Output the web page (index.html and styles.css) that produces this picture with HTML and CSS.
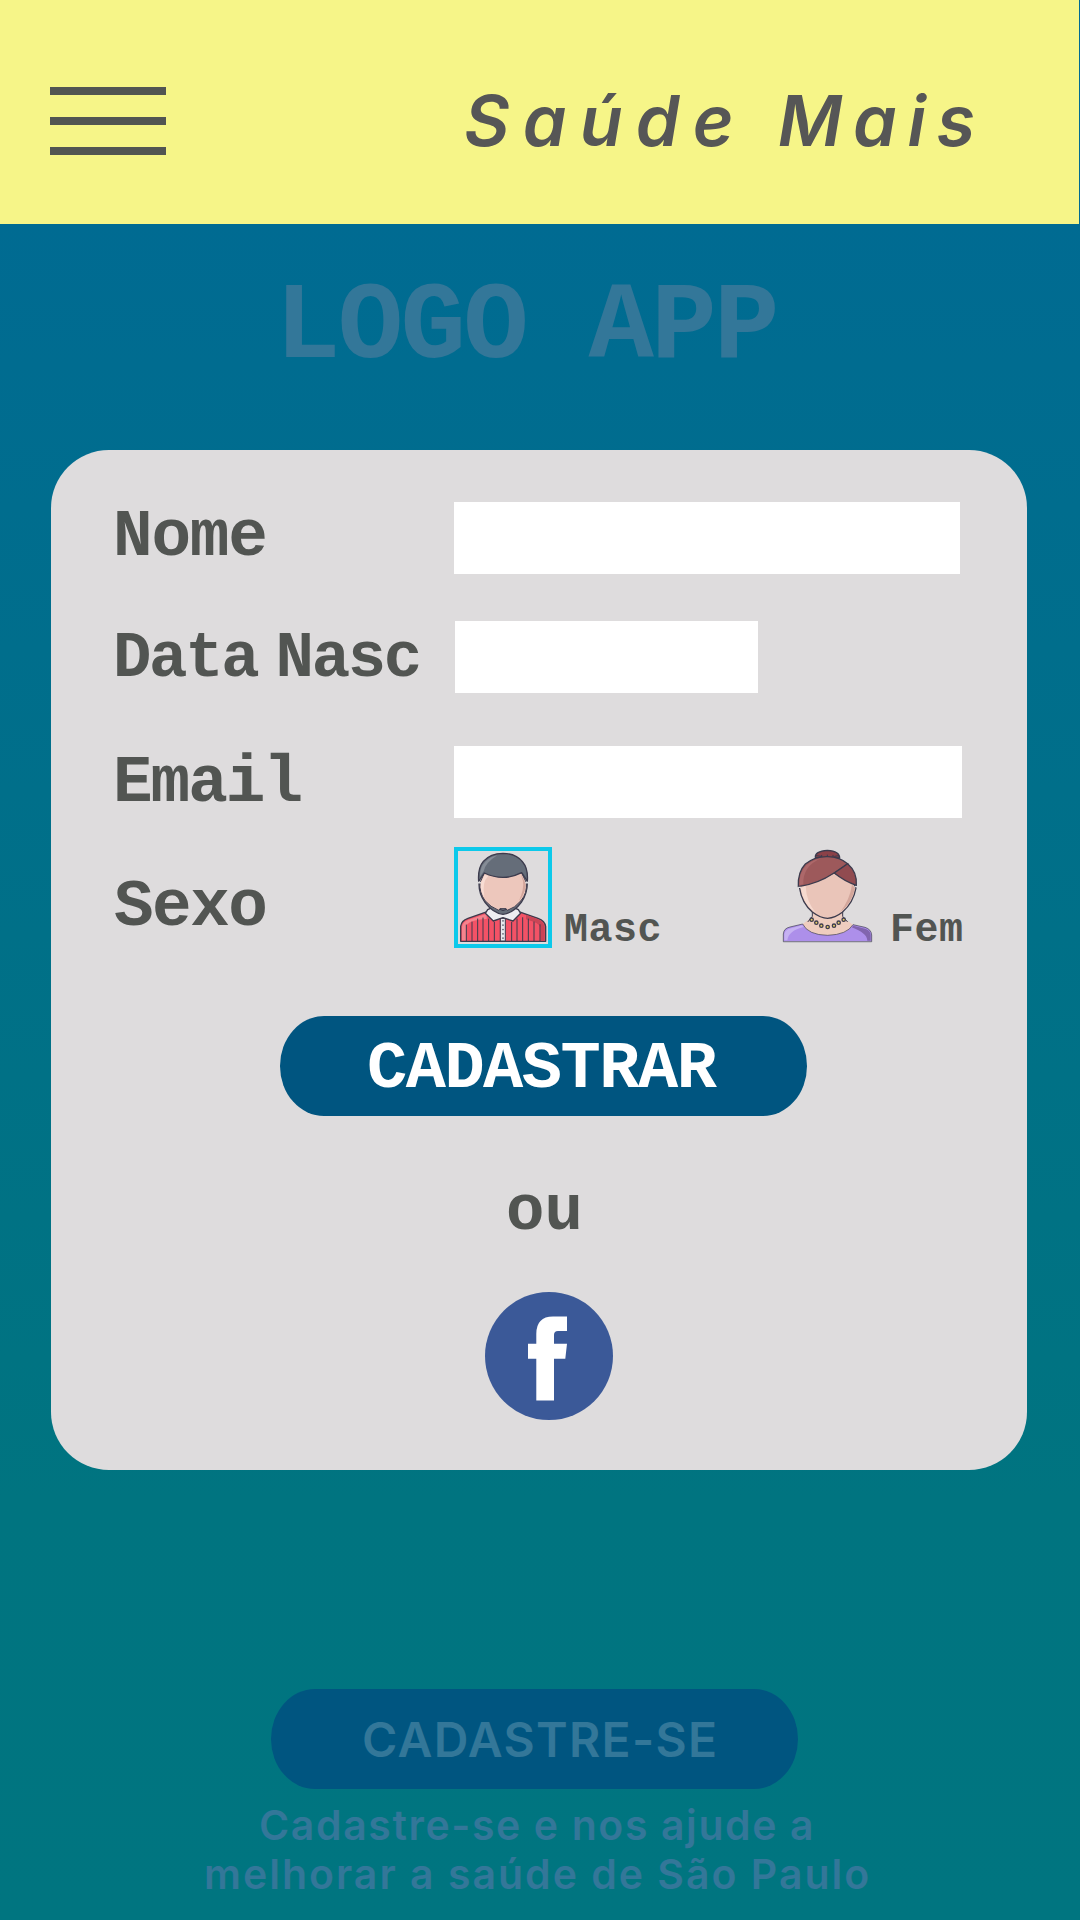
FILE: index.html
```html
<!DOCTYPE html>
<html lang="pt-BR">
<head>
<meta charset="utf-8">
<title>Saúde Mais</title>
<link rel="stylesheet" href="styles.css">
</head>
<body>
<header class="topbar">
  <button class="menu" aria-label="Menu"><span></span><span></span><span></span></button>
  <h1 class="brand">Saúde <span class="brand-second">Mais</span></h1>
</header>
<main class="page">
  <div class="logo">LOGO APP</div>
  <form class="card">
    <div class="row row-name">
      <label class="label" for="nome">Nome</label>
      <input class="field field-name" id="nome" type="text">
    </div>
    <div class="row row-date">
      <label class="label label-date" for="nasc">Data Nasc</label>
      <input class="field field-date" id="nasc" type="text">
    </div>
    <div class="row row-email">
      <label class="label label-email" for="email">Email</label>
      <input class="field field-email" id="email" type="email">
    </div>
    <div class="row row-sex">
      <span class="label label-sex">Sexo</span>
      <div class="option option-masc">
        <svg class="avatar avatar-masc" viewBox="54 63 270 279" stroke="#3c3b4d" stroke-width="4" stroke-linejoin="round" stroke-linecap="round">
          <path d="M62 334V289Q64 272 84 265L144 244Q190 280 234 244L294 265Q315 272 317 290V334Z" fill="#f35266"/>
          <path d="M66 290Q68 275 86 269L140 251V267Q95 268 79 285V331H66Z" fill="#f5838d" stroke="none"/>
          <path d="M258 254L292 267Q312 275 314 291V332H301V292Q299 279 258 268Z" fill="#c94556" stroke="none"/>
          <path d="M79 285V333M96 276V333M113 267V333M129 264V333M146 267V333M163 277V333M215 277V333M231 267V333M248 263V333M265 267V333M282 276V333M300 284V333" fill="none" stroke-width="3"/>
          <path d="M182 265H196V333H182Z" fill="#e8e8ec" stroke-width="3"/>
          <path d="M189 272V333" stroke-width="4" stroke-dasharray="1 12"/>
          <path d="M143 239L136 250L160 273L189 263L219 273L242 250L235 239L215 230H163Z" fill="#eeedf1"/>
          <path d="M117 158Q116 191 135 217Q160 250 189 253Q220 249 244 217Q262 190 262 158Z" fill="#656d79"/>
          <path d="M120 158L133 129H245L259 158Q262 190 243 212Q225 234 202 241L198 236H180L176 241Q151 231 135 212Q117 187 120 158Z" fill="#edc7bc" stroke-width="3"/>
          <path d="M123 159L134 134L145 138Q125 156 133 201Q119 182 123 159Z" fill="#f8dcd3" stroke="none"/>
          <path d="M242 132L256 158Q259 188 237 212Q253 177 249 153Z" fill="#d3a69c" stroke="none"/>
          <path d="M116 154Q113 114 130 94Q151 70 189 70Q229 71 248 96Q265 116 262 154L245 128Q190 156 133 129Z" fill="#656d79"/>
          <path d="M120 140Q119 112 135 96Q150 80 172 76Q136 98 131 124Z" fill="#858c96" stroke="none"/>
          <path d="M180 238L189 242L199 238" fill="none" stroke-width="3"/>
          <path d="M114 158H121M258 158H265" stroke="#dedcdd" stroke-width="5"/>
        </svg>
        <span class="option-text">Masc</span>
      </div>
      <div class="option option-fem">
        <svg class="avatar-fem" viewBox="66 57 273 282" stroke="#3c3b4d" stroke-width="4" stroke-linejoin="round" stroke-linecap="round">
          <path d="M157 238V260L128 282Q143 314 203 317Q263 314 279 284L248 262V238Z" fill="#efcdbf" stroke="none"/>
          <path d="M157 240V259L144 275M248 240V259L262 275" fill="none" stroke-width="3"/>
          <path d="M70 334V312Q71 295 90 291L128 282Q144 315 203 316Q261 314 279 284L315 292Q334 298 335 315V334Z" fill="#ad8fea" stroke-width="2"/>
          <path d="M73 331V313Q75 299 93 295L126 286L131 291Q85 302 82 331Z" fill="#c6b2f2" stroke="none"/>
          <path d="M280 287L315 296Q331 300 332 315V332H322Q321 309 275 292Z" fill="#8165ae" stroke="none"/>
          <path d="M119 175Q125 218 157 246Q182 265 203 265Q225 264 247 247Q280 218 288 174L280 158Q240 140 222 128Q180 152 119 165Z" fill="#eac5b9"/>
          <path d="M122 174L137 168Q139 216 168 249Q130 225 122 174Z" fill="#f6dacf" stroke="none"/>
          <path d="M276 164L285 174Q276 219 241 246Q270 207 276 164Z" fill="#d3a69b" stroke="none"/>
          <path d="M166 82Q165 63 202 61Q239 63 239 84L222 84H181Z" fill="#8b4148"/>
          <path d="M169 77L183 79M185 76V80M202 75V80M219 76V80M236 77L224 79" stroke-width="3"/>
          <path d="M115 170Q113 126 136 102Q165 79 203 80Q240 81 264 102L222 129Q173 162 115 170Z" fill="#9d595b"/>
          <path d="M118 166Q117 128 139 106Q159 90 183 85Q128 109 130 162Z" fill="#ad686a" stroke="none"/>
          <path d="M263 101Q292 126 289 166Q252 153 223 129Z" fill="#914b50"/>
          <path d="M116 172H122M285 170H291" stroke="#dedcdd" stroke-width="4"/>
          <g fill="#e8cd68" stroke-width="4"><circle cx="155" cy="269" r="5"/><circle cx="169" cy="278" r="5"/><circle cx="184" cy="287" r="5"/><circle cx="203" cy="291" r="5"/><circle cx="222" cy="287" r="5"/><circle cx="236" cy="278" r="5"/><circle cx="251" cy="269" r="5"/></g>
        </svg>
        <span class="option-text option-text-fem">Fem</span>
      </div>
    </div>
    <button class="button submit" type="button"><span>CADASTRAR</span></button>
    <div class="or">ou</div>
    <svg class="facebook" viewBox="0 0 128 128" role="img" aria-label="Facebook">
      <circle cx="64" cy="64" r="64" fill="#3b5998"/>
      <path d="M51.3 108.5V66.7H43V51.7H51.3V42Q51.3 24.5 68 24.5H82V39H73Q69 39 69 43V51.7H82L80.3 66.7H69V108.5Z" fill="#fff"/>
    </svg>
  </form>
  <div class="button signup"><span>CADASTRE-SE</span></div>
  <p class="tagline"><span class="line-one">Cadastre-se e nos ajude a</span><br><span class="line-two">melhorar a saúde de São Paulo</span></p>
</main>
</body>
</html>
```
FILE: styles.css
```css
* {
  box-sizing: border-box;
}

body {
  margin: 0;
  width: 1080px;
  height: 1920px;
  overflow: hidden;
  background: linear-gradient(#006a94 0, #006b92 224px, #007480 1500px, #007580 1920px);
  color: #525552;
  font-family: "Liberation Mono", monospace;
  font-weight: 700;
}

.topbar {
  width: 1079px;
  height: 224px;
  padding: 0 0 0 50px;
  display: flex;
  align-items: flex-start;
  background: #f6f588;
}

.menu {
  width: 116px;
  margin: 87px 0 0;
  padding: 0;
  border: 0;
  background: none;
  display: grid;
  gap: 22px;
}

.menu span {
  height: 8px;
  background: #525552;
}

.brand {
  margin: 79px 0 0 298px;
  font: italic 600 70px/84px Inter, sans-serif;
  font-feature-settings: "cv11";
  letter-spacing: 13.2px;
  white-space: nowrap;
  color: #565656;
}

.brand-second {
  letter-spacing: 10.8px;
}

.page {
  display: flex;
  flex-direction: column;
}

.logo {
  height: 226px;
  padding: 44px 0 0 275px;
  font-size: 109px;
  line-height: 120px;
  letter-spacing: -2.7px;
  color: #337799;
}

.card {
  width: 976px;
  height: 1020px;
  margin-left: 51px;
  padding-top: 52px;
  border-radius: 58px;
  background: #dedcdd;
}

.row {
  display: flex;
  align-items: center;
  height: 72px;
  padding-left: 62px;
}

.row-date {
  margin-top: 47px;
}

.row-email {
  margin-top: 53px;
}

.row-sex {
  height: 101px;
  margin-top: 29px;
}

.label {
  width: 341px;
  font-size: 66px;
  line-height: 72px;
  letter-spacing: -1.2px;
  white-space: nowrap;
}

.label-date {
  padding-top: 4px;
  font-size: 64px;
  letter-spacing: -2.3px;
  word-spacing: -18px;
}

.label-email {
  padding-top: 3px;
  letter-spacing: -2px;
}

.label-sex {
  padding: 20px 0 0 1px;
  letter-spacing: -1.5px;
}

.field {
  height: 72px;
  padding: 0 16px;
  border: 0;
  border-radius: 0;
  background: #fff;
}

.field-name {
  width: 506px;
}

.field-date {
  width: 303px;
  margin-left: 1px;
}

.field-email {
  width: 508px;
}

.option {
  display: flex;
  align-items: flex-start;
  height: 101px;
}

.option-masc {
  width: 328px;
}

.avatar {
  box-sizing: content-box;
  width: 90px;
  height: 93px;
  border: 4px solid #0cc9ea;
}

.avatar-fem {
  width: 91px;
  height: 94px;
  margin-top: 2px;
}

.option-text {
  margin: 60px 0 0 12px;
  font-size: 40px;
  line-height: 48px;
  letter-spacing: 0.5px;
}

.option-text-fem {
  margin-left: 17px;
}

.button {
  display: block;
  width: 527px;
  height: 100px;
  border: 0;
  border-radius: 44px / 50px;
  background: #005580;
  white-space: nowrap;
}

.submit {
  margin: 68px 0 0 229px;
  padding: 7px 0 0 87px;
  text-align: left;
  color: #fff;
  font: 700 67px/93px "Liberation Mono", monospace;
  letter-spacing: -1.5px;
}

.or {
  margin: 60px 0 0 455px;
  font-size: 64px;
  line-height: 72px;
}

.facebook {
  display: block;
  width: 128px;
  height: 128px;
  margin: 44px 0 0 434px;
}

.signup {
  margin: 219px 0 0 271px;
  padding-left: 91px;
  font: 600 48px/101px Inter, sans-serif;
  letter-spacing: 1.3px;
  color: #337799;
}

.tagline {
  margin: 12px 0 0 204px;
  font: 600 41px/49px Inter, sans-serif;
  color: #337799;
  white-space: nowrap;
}

.line-one {
  margin-left: 55px;
  letter-spacing: 1.6px;
}

.line-two {
  letter-spacing: 2px;
}
```
